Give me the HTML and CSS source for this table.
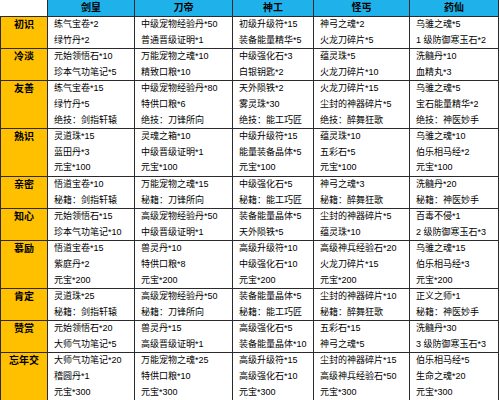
FILE: index.html
```html
<!DOCTYPE html>
<html lang="zh">
<head>
<meta charset="utf-8">
<link rel="stylesheet" href="styles.css">
</head>
<body>
<table class="grid">
  <colgroup>
    <col class="c0"><col class="c1"><col class="c2"><col class="c3"><col class="c4"><col class="c5">
  </colgroup>
  <thead>
    <tr class="head">
      <th class="corner"></th><th>剑皇</th><th>刀帝</th><th>神工</th><th>怪丐</th><th>药仙</th>
    </tr>
  </thead>
  <tbody>
    <tr>
      <th class="lvl">初识</th>
      <td><div>练气宝卷*2</div><div>绿竹丹*2</div></td>
      <td><div>中级宠物经验丹*50</div><div>普通晋级证明*1</div></td>
      <td><div>初级升级符*15</div><div>装备能量精华*5</div></td>
      <td><div>神弓之魂*2</div><div>火龙刀碎片*5</div></td>
      <td><div>乌骓之魂*5</div><div>1 级防御寒玉石*2</div></td>
    </tr>
    <tr>
      <th class="lvl">冷淡</th>
      <td><div>元始领悟石*10</div><div>珍本气功笔记*5</div></td>
      <td><div>万能宠物之魂*10</div><div>精致口粮*10</div></td>
      <td><div>中级强化石*3</div><div>白银钥匙*2</div></td>
      <td><div>蕴灵珠*5</div><div>火龙刀碎片*10</div></td>
      <td><div>洗髓丹*10</div><div>血精丸*3</div></td>
    </tr>
    <tr>
      <th class="lvl">友善</th>
      <td><div>练气宝卷*15</div><div>绿竹丹*5</div><div>绝技：剑指轩辕</div></td>
      <td><div>中级宠物经验丹*80</div><div>特供口粮*6</div><div>绝技：刀锋所向</div></td>
      <td><div>天外陨铁*2</div><div>雾灵珠*30</div><div>绝技：能工巧匠</div></td>
      <td><div>火龙刀碎片*15</div><div>尘封的神器碎片*5</div><div>绝技：醉舞狂歌</div></td>
      <td><div>乌骓之魂*5</div><div>宝石能量精华*2</div><div>绝技：神医妙手</div></td>
    </tr>
    <tr>
      <th class="lvl">熟识</th>
      <td><div>灵道珠*15</div><div>蓝田丹*3</div><div>元宝*100</div></td>
      <td><div>灵魂之箱*10</div><div>中级晋级证明*1</div><div>元宝*100</div></td>
      <td><div>中级升级符*15</div><div>能量装备晶体*5</div><div>元宝*100</div></td>
      <td><div>蕴灵珠*10</div><div>五彩石*5</div><div>元宝*100</div></td>
      <td><div>乌骓之魂*10</div><div>伯乐相马经*2</div><div>元宝*100</div></td>
    </tr>
    <tr>
      <th class="lvl">亲密</th>
      <td><div>悟道宝卷*10</div><div>秘籍：剑指轩辕</div></td>
      <td><div>万能宠物之魂*15</div><div>秘籍：刀锋所向</div></td>
      <td><div>中级强化石*5</div><div>秘籍：能工巧匠</div></td>
      <td><div>神弓之魂*3</div><div>秘籍：醉舞狂歌</div></td>
      <td><div>洗髓丹*20</div><div>秘籍：神医妙手</div></td>
    </tr>
    <tr>
      <th class="lvl">知心</th>
      <td><div>元始领悟石*15</div><div>珍本气功笔记*10</div></td>
      <td><div>高级宠物经验丹*50</div><div>中级晋级证明*1</div></td>
      <td><div>装备能量晶体*5</div><div>天外陨铁*5</div></td>
      <td><div>尘封的神器碎片*5</div><div>蕴灵珠*10</div></td>
      <td><div>百毒不侵*1</div><div>2 级防御寒玉石*3</div></td>
    </tr>
    <tr>
      <th class="lvl">慕励</th>
      <td><div>悟道宝卷*15</div><div>紫庭丹*2</div><div>元宝*200</div></td>
      <td><div>兽灵丹*10</div><div>特供口粮*8</div><div>元宝*200</div></td>
      <td><div>高级升级符*10</div><div>中级强化石*10</div><div>元宝*200</div></td>
      <td><div>高级神兵经验石*20</div><div>火龙刀碎片*15</div><div>元宝*200</div></td>
      <td><div>乌骓之魂*15</div><div>伯乐相马经*3</div><div>元宝*200</div></td>
    </tr>
    <tr>
      <th class="lvl">肯定</th>
      <td><div>灵道珠*25</div><div>秘籍：剑指轩辕</div></td>
      <td><div>高级宠物经验丹*50</div><div>秘籍：刀锋所向</div></td>
      <td><div>装备能量晶体*5</div><div>秘籍：能工巧匠</div></td>
      <td><div>尘封的神器碎片*10</div><div>秘籍：醉舞狂歌</div></td>
      <td><div>正义之师*1</div><div>秘籍：神医妙手</div></td>
    </tr>
    <tr>
      <th class="lvl">赞赏</th>
      <td><div>元始领悟石*20</div><div>大师气功笔记*5</div></td>
      <td><div>兽灵丹*15</div><div>高级晋级证明*1</div></td>
      <td><div>高级强化石*5</div><div>装备能量晶体*10</div></td>
      <td><div>五彩石*15</div><div>神弓之魂*5</div></td>
      <td><div>洗髓丹*30</div><div>3 级防御寒玉石*3</div></td>
    </tr>
    <tr>
      <th class="lvl">忘年交</th>
      <td><div>大师气功笔记*20</div><div>稽圆丹*1</div><div>元宝*300</div></td>
      <td><div>万能宠物之魂*25</div><div>特供口粮*10</div><div>元宝*300</div></td>
      <td><div>高级升级符*15</div><div>高级强化石*10</div><div>元宝*300</div></td>
      <td><div>尘封的神器碎片*15</div><div>高级神兵经验石*50</div><div>元宝*300</div></td>
      <td><div>伯乐相马经*5</div><div>生命之魂*20</div><div>元宝*300</div></td>
    </tr>
  </tbody>
</table>
</body>
</html>
```
FILE: styles.css
```css
html, body {
  margin: 0;
  padding: 0;
  background: #ffffff;
}

body {
  font-family: "Liberation Sans", "Noto Sans CJK SC", sans-serif;
  color: #000000;
  overflow: hidden;
}

.grid {
  border-collapse: collapse;
  table-layout: fixed;
  width: 498px;
}

.c0 { width: 47px; }
.c1 { width: 87px; }
.c2 { width: 98px; }
.c3 { width: 81px; }
.c4 { width: 96px; }
.c5 { width: 89px; }

.grid th,
.grid td {
  border: 1px solid #2b2b2b;
  padding: 0;
}

.head th {
  background: #1fb2ea;
  height: 16px;
  line-height: 16px;
  font-size: 10px;
  font-weight: bold;
  text-align: center;
  border-top: none;
}

.head .corner {
  background: #ffffff;
  border-left: none;
  border-top: none;
}

.lvl {
  background: #ffc000;
  font-size: 10px;
  font-weight: bold;
  text-align: center;
  vertical-align: top;
  line-height: 15.6px;
  border-left: none;
}

.grid td {
  vertical-align: top;
  font-size: 9px;
  line-height: 15.6px;
  padding-left: 6px;
  white-space: nowrap;
  overflow: hidden;
}
```
